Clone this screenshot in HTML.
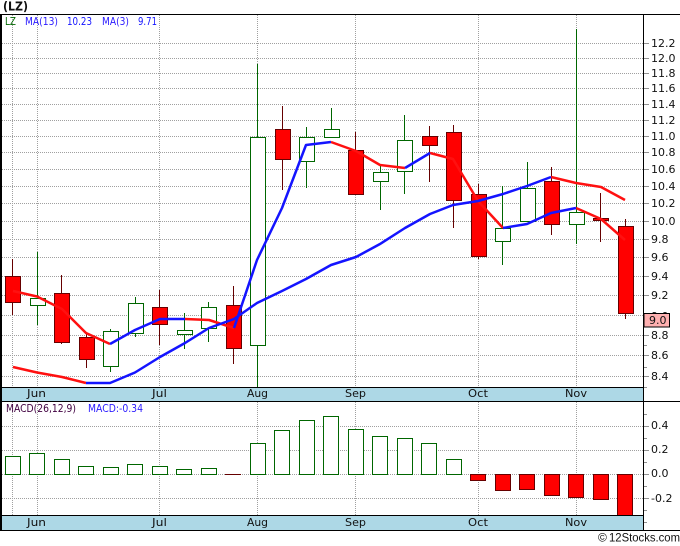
<!DOCTYPE html>
<html><head><meta charset="utf-8"><style>
html,body{margin:0;padding:0;background:#fff;width:680px;height:546px;overflow:hidden}
svg{display:block}
text{font-family:"DejaVu Sans",sans-serif;font-size:11px;fill:#111}
.g{stroke:#a0a0a0;stroke-width:1;stroke-dasharray:1 1;fill:none}
.c{shape-rendering:crispEdges}
.r rect{fill:#f00;stroke:#600}
.r path{stroke:#600;fill:none}
.n rect{fill:#fff;stroke:#060}
.n path{stroke:#060;fill:none}
</style></head><body>
<svg width="680" height="546" viewBox="0 0 680 546" xmlns="http://www.w3.org/2000/svg">
<rect width="680" height="546" fill="#fff"/>
<g class="c">
<rect x="1" y="387" width="642" height="14" fill="#add8e6"/>
<rect x="1" y="515" width="642" height="15" fill="#add8e6"/>
<path class="g" d="M2 43.5H643M2 58.5H643M2 73.5H643M2 88.5H643M2 104.5H643M2 120.5H643M2 136.5H643M2 152.5H643M2 169.5H643M2 186.5H643M2 203.5H643M2 221.5H643M2 239.5H643M2 257.5H643M2 276.5H643M2 295.5H643M2 315.5H643M2 335.5H643M2 355.5H643M2 376.5H643M2 426.5H643M2 450.5H643M2 474.5H643M2 498.5H643"/>
<path class="g" d="M12.5 15V387M37.5 15V387M159.5 15V387M257.5 15V387M355.5 15V387M478.5 15V387M576.5 15V387M12.5 402V515M37.5 402V515M159.5 402V515M257.5 402V515M355.5 402V515M478.5 402V515M576.5 402V515"/>

<g class="r">
<path d="M12.5 259V315M61.5 275V344M86.5 332V368M159.5 290V345M233.5 286V364M282.5 106V190M355.5 132V194M429.5 126V182M453.5 125V228M478.5 184V259M551.5 167V235M600.5 193V242M625.5 219V319"/>
<rect x="5.5" y="276.5" width="15" height="26"/>
<rect x="54.5" y="293.5" width="15" height="49"/>
<rect x="79.5" y="337.5" width="15" height="22"/>
<rect x="152.5" y="307.5" width="15" height="17"/>
<rect x="226.5" y="305.5" width="15" height="43"/>
<rect x="275.5" y="129.5" width="15" height="30"/>
<rect x="348.5" y="150.5" width="15" height="44"/>
<rect x="422.5" y="136.5" width="15" height="9"/>
<rect x="446.5" y="132.5" width="15" height="68"/>
<rect x="471.5" y="194.5" width="15" height="62"/>
<rect x="544.5" y="181.5" width="15" height="43"/>
<rect x="593.5" y="218.5" width="15" height="2"/>
<rect x="618.5" y="226.5" width="15" height="87"/>
</g>
<g class="n">
<path d="M37.5 252V325M110.5 329V372M135.5 297V337M184.5 313V349M208.5 302V342M257.5 64V387M306.5 127V188M331.5 108V137M380.5 165V210M404.5 115V194M502.5 186V265M527.5 162V221M576.5 29V244"/>
<rect x="30.5" y="298.5" width="15" height="7"/>
<rect x="103.5" y="331.5" width="15" height="35"/>
<rect x="128.5" y="303.5" width="15" height="30"/>
<rect x="177.5" y="330.5" width="15" height="4"/>
<rect x="201.5" y="307.5" width="15" height="21"/>
<rect x="250.5" y="137.5" width="15" height="208"/>
<rect x="299.5" y="137.5" width="15" height="24"/>
<rect x="324.5" y="129.5" width="15" height="8"/>
<rect x="373.5" y="172.5" width="15" height="9"/>
<rect x="397.5" y="140.5" width="15" height="31"/>
<rect x="495.5" y="228.5" width="15" height="13"/>
<rect x="520.5" y="188.5" width="15" height="33"/>
<rect x="569.5" y="212.5" width="15" height="12"/>
</g>

<!-- MACD bars -->
<g class="n">
<rect x="5.5" y="456.5" width="15" height="18"/>
<rect x="29.5" y="453.5" width="15" height="21"/>
<rect x="54.5" y="459.5" width="15" height="15"/>
<rect x="78.5" y="466.5" width="15" height="8"/>
<rect x="103.5" y="467.5" width="15" height="7"/>
<rect x="127.5" y="464.5" width="15" height="10"/>
<rect x="152.5" y="466.5" width="15" height="8"/>
<rect x="176.5" y="469.5" width="15" height="5"/>
<rect x="201.5" y="468.5" width="15" height="6"/>
<rect x="250.5" y="443.5" width="15" height="31"/>
<rect x="274.5" y="430.5" width="15" height="44"/>
<rect x="299.5" y="420.5" width="15" height="54"/>
<rect x="323.5" y="416.5" width="15" height="58"/>
<rect x="348.5" y="429.5" width="15" height="45"/>
<rect x="372.5" y="436.5" width="15" height="38"/>
<rect x="397.5" y="438.5" width="15" height="36"/>
<rect x="421.5" y="443.5" width="15" height="31"/>
<rect x="446.5" y="459.5" width="15" height="15"/>
</g>
<g class="r">
<path d="M225 474.5H241"/>
<rect x="470.5" y="474.5" width="15" height="6"/>
<rect x="495.5" y="474.5" width="15" height="16"/>
<rect x="519.5" y="474.5" width="15" height="15"/>
<rect x="544.5" y="474.5" width="15" height="21"/>
<rect x="568.5" y="474.5" width="15" height="23"/>
<rect x="593.5" y="474.5" width="15" height="25"/>
<rect x="617.5" y="474.5" width="15" height="41"/>
</g>
</g>

<!-- moving averages -->
<g fill="none" stroke-width="2.5" stroke-linejoin="round">
<path stroke="#ff1010" d="M13 367L37 372.5L62 377L86 383M13 291L37 296.5L62 309L86 333L110 344M185 319L209 320L234 328M331 142L356 151L380 165L405 168M430 153L453 159L478 201L503 228M576 208L601 219L625 240M551 177L576 183L601 187L625 200"/>
<path stroke="#1414ff" d="M86 383L110 383L135 372.5L160 357L185 343L209 328L234 319L257 303L282 291L306 279L331 265L356 257L380 244L405 228L430 214L453 205L478 201L503 194L527 186L551 177M110 344L135 330L160 319L185 319M234 328L257 260L282 208L306 145L331 142M405 168L430 153M503 228L527 224L551 213L576 208"/>
</g>

<!-- frame -->
<g class="c" fill="none" stroke="#000">
<path d="M0 14.5H680M1 387.5H643M0 401.5H680M1 515.5H643M0 530.5H680M643.5 14V530"/>
<path stroke-width="2" d="M1 14V530"/>
<path stroke="#909090" d="M644 43.5H649M644 58.5H649M644 73.5H649M644 88.5H649M644 104.5H649M644 120.5H649M644 136.5H649M644 152.5H649M644 169.5H649M644 186.5H649M644 203.5H649M644 221.5H649M644 239.5H649M644 257.5H649M644 276.5H649M644 295.5H649M644 335.5H649M644 355.5H649M644 376.5H649M644 345.5H647M644 367.5H647M644 387.5H647M644 426.5H649M644 450.5H649M644 474.5H649M644 498.5H649M644 414.5H647M644 438.5H647M644 462.5H647M644 486.5H647M644 510.5H647M644 522.5H647"/>
</g>

<!-- axis labels -->
<g>
<text x="651" y="47">12.2</text><text x="651" y="62">12.0</text><text x="651" y="77">11.8</text><text x="651" y="92">11.6</text><text x="651" y="108">11.4</text><text x="651" y="124">11.2</text><text x="651" y="140">11.0</text><text x="651" y="156">10.8</text><text x="651" y="173">10.6</text><text x="651" y="190">10.4</text><text x="651" y="207">10.2</text><text x="651" y="225">10.0</text>
<text x="651" y="243">9.8</text><text x="651" y="261">9.6</text><text x="651" y="280">9.4</text><text x="651" y="299">9.2</text><text x="651" y="320">9.0</text><text x="651" y="339">8.8</text><text x="651" y="359">8.6</text><text x="651" y="380">8.4</text>
<text x="651" y="429">0.4</text><text x="651" y="453">0.2</text><text x="651" y="477">0.0</text><text x="651" y="502">-0.2</text>
</g>
<rect class="c" x="644" y="313.5" width="25.5" height="13.5" fill="#ffb0b0" stroke="#000"/>
<text x="649" y="324">9.0</text>

<!-- month labels -->
<g>
<text x="27" y="397" textLength="19" lengthAdjust="spacingAndGlyphs">Jun</text><text x="152" y="397" textLength="15" lengthAdjust="spacingAndGlyphs">Jul</text><text x="247" y="397" textLength="21" lengthAdjust="spacingAndGlyphs">Aug</text><text x="345" y="397" textLength="21" lengthAdjust="spacingAndGlyphs">Sep</text><text x="468" y="397" textLength="20" lengthAdjust="spacingAndGlyphs">Oct</text><text x="565" y="397" textLength="22" lengthAdjust="spacingAndGlyphs">Nov</text>
<text x="27" y="526" textLength="19" lengthAdjust="spacingAndGlyphs">Jun</text><text x="152" y="526" textLength="15" lengthAdjust="spacingAndGlyphs">Jul</text><text x="247" y="526" textLength="21" lengthAdjust="spacingAndGlyphs">Aug</text><text x="345" y="526" textLength="21" lengthAdjust="spacingAndGlyphs">Sep</text><text x="468" y="526" textLength="20" lengthAdjust="spacingAndGlyphs">Oct</text><text x="565" y="526" textLength="22" lengthAdjust="spacingAndGlyphs">Nov</text>
</g>

<!-- legend -->
<text x="3" y="10.5" style="font-weight:bold;font-size:12px" textLength="25" lengthAdjust="spacingAndGlyphs">(LZ)</text>
<g>
<text x="5" y="25" textLength="11" lengthAdjust="spacingAndGlyphs" style="fill:#060">LZ</text>
<text x="25" y="25" textLength="33" lengthAdjust="spacingAndGlyphs" style="fill:#2a1aff">MA(13)</text>
<text x="67" y="25" textLength="25" lengthAdjust="spacingAndGlyphs" style="fill:#1414ff">10.23</text>
<text x="102" y="25" textLength="27" lengthAdjust="spacingAndGlyphs" style="fill:#2a1aff">MA(3)</text>
<text x="138" y="25" textLength="19" lengthAdjust="spacingAndGlyphs" style="fill:#1414ff">9.71</text>
<text x="6" y="412" textLength="70" lengthAdjust="spacingAndGlyphs" style="fill:#400040">MACD(26,12,9)</text>
<text x="88" y="412" textLength="55" lengthAdjust="spacingAndGlyphs" style="fill:#2a1aff">MACD:-0.34</text>
</g>
<text x="598" y="541.5" style="font-family:'Liberation Sans',sans-serif;font-size:12px">©</text>
<text x="609" y="541.5" style="font-family:'Liberation Sans',sans-serif;font-size:12px" textLength="71" lengthAdjust="spacingAndGlyphs">12Stocks.com</text>
</svg>
</body></html>
